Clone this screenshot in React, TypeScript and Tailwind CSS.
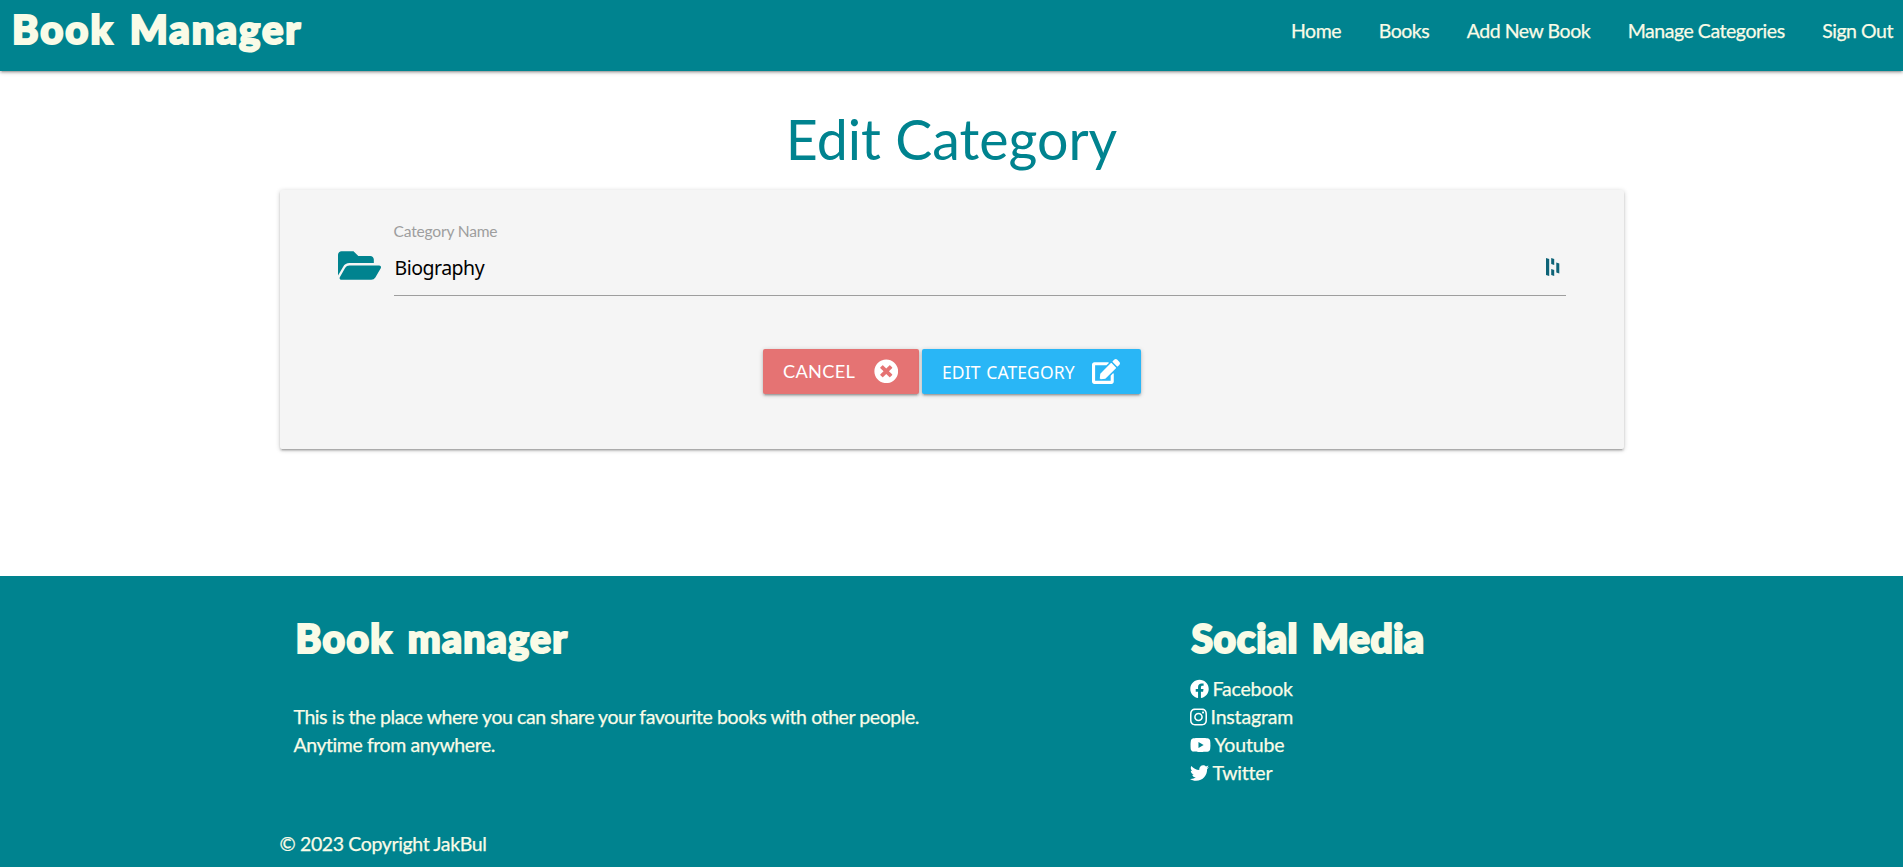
import { FaFolderOpen, FaTimesCircle, FaEdit, FaFacebook, FaInstagram, FaYoutube, FaTwitter } from "react-icons/fa";

const links = ["Home", "Books", "Add New Book", "Manage Categories", "Sign Out"];

const socials = [
  { name: "Facebook", Icon: FaFacebook, size: "w-[19px]" },
  { name: "Instagram", Icon: FaInstagram, size: "w-[17px]" },
  { name: "Youtube", Icon: FaYoutube, size: "w-[21px]" },
  { name: "Twitter", Icon: FaTwitter, size: "w-[19px]" },
];

const lift =
  "shadow-[0_2px_2px_0_rgba(0,0,0,0.14),0_3px_1px_-2px_rgba(0,0,0,0.12),0_1px_5px_0_rgba(0,0,0,0.2)]";

const display = "font-black [-webkit-text-stroke:2.2px_#f9fbe7]";

const crisp = "[-webkit-text-stroke:0.25px_#f9fbe7]";

export default function App() {
  return (
    <div className="flex h-[867px] flex-col overflow-hidden bg-white font-['Lato',sans-serif] text-[19.5px] leading-[28px] text-[#f9fbe7]">
      <header className={`flex h-[71px] shrink-0 justify-between bg-[#00838f] ${lift}`}>
        <h1 className={`pl-[12px] pt-[5px] text-[40px] leading-[48px] tracking-[2px] [word-spacing:4px] ${display}`}>Book Manager</h1>
        <nav className={`flex gap-[37.5px] pr-[10px] pt-[17px] tracking-[-0.46px] ${crisp}`}>
          {links.map((l) => (
            <a key={l} href="#" className="whitespace-nowrap">{l}</a>
          ))}
        </nav>
      </header>

      <main className="flex h-[505px] shrink-0 flex-col items-center">
        <h2 className="mt-[38px] text-[55.5px] leading-[60px] text-[#00838f]">Edit Category</h2>
        <form className={`mt-[21px] flex h-[259px] w-[1344px] flex-col rounded-[2px] bg-[#f5f5f5] px-[58px] pt-[31px] ${lift}`}>
          <div className="flex">
            <FaFolderOpen className="mt-[20px] h-[49px] w-[43px] text-[#00838f]" />
            <label className="ml-[13px] flex h-[75px] flex-1 flex-col border-b border-[#9e9e9e] text-[15.6px] leading-[20px] tracking-[-0.2px] text-[#9e9e9e]">
              Category Name
              <span className="flex items-center justify-between pl-px pr-[6px] pt-[10px] font-['Noto_Sans',sans-serif] text-[19.5px] leading-[34px] tracking-[-0.5px] text-black">
                Biography
                <svg viewBox="0 0 14 18" className="mb-[2px] h-[18px] w-[14px] fill-[#0e6377]">
                  <path d="M0 0l3.2 1v17L0 17zM5.2 0l3 1v6l-3-1zM5.2 11l3 1v6l-3-1zM10.3 4.5l3 1v10l-3-1z" />
                </svg>
              </span>
            </label>
          </div>
          <div className="mt-[53px] flex justify-center gap-[3px] text-white">
            <button type="button" className={`flex h-[45px] w-[156px] items-center justify-between rounded-[2px] bg-[#e57373] pb-[1px] pl-[20.5px] pr-[20.5px] ${lift}`}>
              <span className="text-[18.2px] tracking-[0.3px]">CANCEL</span>
              <FaTimesCircle className="size-[24.5px]" />
            </button>
            <button type="button" className={`flex h-[45px] w-[219px] items-center justify-between rounded-[2px] bg-[#29b6f6] pb-[1px] pl-[20.5px] pr-[20.5px] ${lift}`}>
              <span className="pt-[1px] font-['Noto_Sans',sans-serif] text-[17.5px] tracking-[0.1px] [word-spacing:1px]">EDIT CATEGORY</span>
              <FaEdit className="h-[25px] w-[28px]" />
            </button>
          </div>
        </form>
      </main>

      <footer className="flex-1 bg-[#00838f]">
        <div className="mx-auto flex h-[254px] w-[1344px]">
          <section className="w-[896px] pl-[14px] pt-[37px]">
            <h3 className={`pl-[2px] text-[39px] leading-[50px] tracking-[1.4px] [word-spacing:4px] ${display}`}>Book manager</h3>
            <p className={`mt-[40px] tracking-[-0.43px] ${crisp}`}>
              This is the place where you can share your favourite books with other people.
              <br />
              Anytime from anywhere.
            </p>
          </section>
          <section className="pl-[14px] pt-[37px]">
            <h3 className={`pl-[2px] text-[39px] leading-[50px] tracking-[0.6px] [word-spacing:4px] ${display}`}>Social Media</h3>
            <ul className={`mt-[12px] tracking-[-0.18px] ${crisp}`}>
              {socials.map(({ name, Icon, size }) => (
                <li key={name} className="flex items-center gap-[4px]">
                  <Icon className={`h-[20px] text-white ${size}`} />
                  {name}
                </li>
              ))}
            </ul>
          </section>
        </div>
        <p className={`mx-auto w-[1344px] tracking-[-0.37px] ${crisp}`}>© 2023 Copyright JakBul</p>
      </footer>
    </div>
  );
}
